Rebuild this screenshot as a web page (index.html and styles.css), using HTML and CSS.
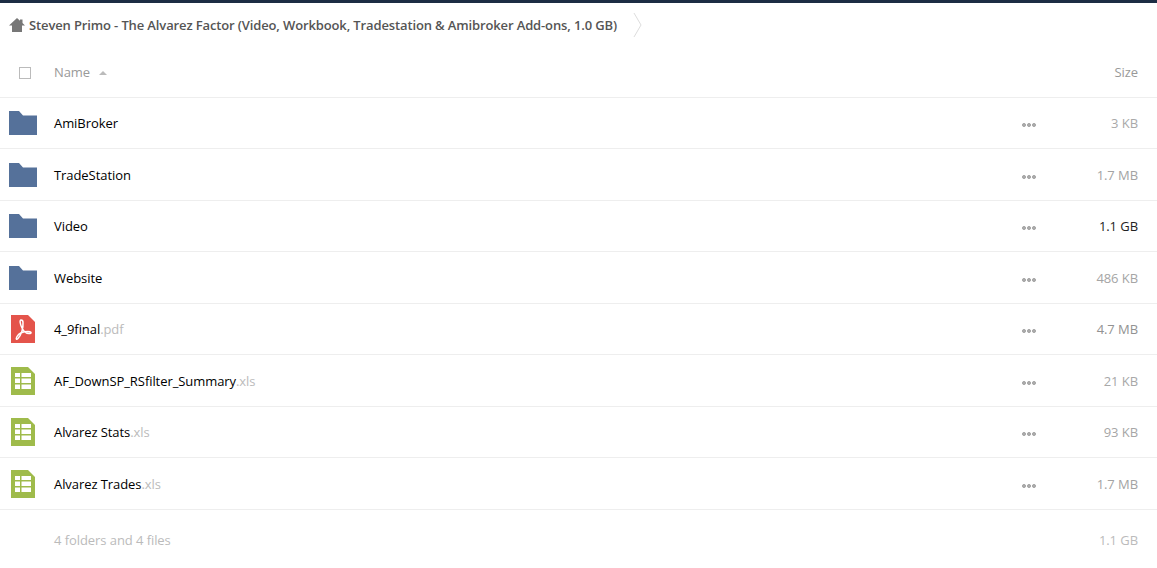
FILE: index.html
```html
<!DOCTYPE html>
<html lang="en">
<head>
  <meta charset="UTF-8" />
  <title>Files</title>
  <link rel="stylesheet" href="styles.css">
</head>
<body>
  <svg class="defs" width="0" height="0">
    <symbol id="folder" viewBox="0 0 28 24"><path d="M0 0h10l4 4.500h14V24H0z" fill="#55719a"/></symbol>
    <symbol id="sheet" viewBox="0 0 24 28">
      <path d="M0 0h17l7 7v21H0z" fill="#9fbb4b"/>
      <path d="M4 6h5v4H4zM10.500 6H20v4h-9.500zM4 11.500h5v4.500H4zM10.500 11.500H20V16h-9.500zM4 17.500h5V22H4zM10.500 17.500H20V22h-9.500z" fill="#fff"/>
    </symbol>
    <symbol id="pdf" viewBox="0 0 24 28">
      <path d="M0 0h17l7 7v21H0z" fill="#e4544b"/>
      <path d="M10 5c-1.500 0-1 4 1 8 2 4 5 6 8 5.500 2-.5 1-2-2-2-4 0-9 1.500-11 5-1.500 2.500-.5 3.500 1 2 3-3 5.500-10 5-16 0-2-1-2.500-2-2.500z" fill="none" stroke="#fff" stroke-width="1.500"/>
    </symbol>
  </svg>

  <div class="topbar"></div>

  <nav class="crumbs">
    <svg class="home" width="16" height="14" viewBox="0 0 16 14"><path d="M8 0 0 7.500h3V14h10V7.500h3L13.500 5V1.500H11v1.300z" fill="#777"/></svg>
    <span class="crumb-title">Steven Primo - The Alvarez Factor (Video, Workbook, Tradestation &amp; Amibroker Add-ons, 1.0 GB)</span>
    <svg class="crumb-arrow" width="9" height="26" viewBox="0 0 9 26"><path d="M1 1l7 12-7 12" fill="none" stroke="#ddd"/></svg>
  </nav>

  <div class="row head">
    <span class="check"></span>
    <span class="name">Name <i class="sort"></i></span>
    <span class="size">Size</span>
  </div>

  <div class="row">
    <svg class="icon folder"><use href="#folder"/></svg>
    <span class="name">AmiBroker</span>
    <span class="more"></span>
    <span class="size" style="color:#a9a9a9">3 KB</span>
  </div>
  <div class="row">
    <svg class="icon folder"><use href="#folder"/></svg>
    <span class="name">TradeStation</span>
    <span class="more"></span>
    <span class="size" style="color:#a3a3a3">1.7 MB</span>
  </div>
  <div class="row">
    <svg class="icon folder"><use href="#folder"/></svg>
    <span class="name">Video</span>
    <span class="more"></span>
    <span class="size" style="color:#222">1.1 GB</span>
  </div>
  <div class="row">
    <svg class="icon folder"><use href="#folder"/></svg>
    <span class="name">Website</span>
    <span class="more"></span>
    <span class="size" style="color:#a5a5a5">486 KB</span>
  </div>
  <div class="row">
    <svg class="icon file"><use href="#pdf"/></svg>
    <span class="name">4_9final<em>.pdf</em></span>
    <span class="more"></span>
    <span class="size" style="color:#929292">4.7 MB</span>
  </div>
  <div class="row">
    <svg class="icon file"><use href="#sheet"/></svg>
    <span class="name">AF_DownSP_RSfilter_Summary<em>.xls</em></span>
    <span class="more"></span>
    <span class="size" style="color:#a8a8a8">21 KB</span>
  </div>
  <div class="row">
    <svg class="icon file"><use href="#sheet"/></svg>
    <span class="name">Alvarez Stats<em>.xls</em></span>
    <span class="more"></span>
    <span class="size" style="color:#a6a6a6">93 KB</span>
  </div>
  <div class="row">
    <svg class="icon file"><use href="#sheet"/></svg>
    <span class="name">Alvarez Trades<em>.xls</em></span>
    <span class="more"></span>
    <span class="size" style="color:#a3a3a3">1.7 MB</span>
  </div>

  <div class="row summary">
    <span class="name">4 folders and 4 files</span>
    <span class="size">1.1 GB</span>
  </div>
</body>
</html>
```

FILE: styles.css
```css
html {
  overflow: hidden;
}
body {
  margin: 0;
  font-family: "Open Sans", sans-serif;
  font-size: 13px;
  letter-spacing: -0.07px;
  color: #000;
  background: #fff;
}
.defs {
  position: absolute;
}
.topbar {
  height: 3px;
  background: #1d2d44;
}
.crumbs {
  display: flex;
  align-items: center;
  height: 44px;
  padding-left: 9px;
  color: #555;
  font-weight: 600;
  letter-spacing: -0.13px;
}
.home {
  margin-right: 4px;
}
.crumb-arrow {
  margin-left: 16px;
}
.row {
  display: flex;
  align-items: center;
  height: 51.5px;
  box-sizing: border-box;
  border-bottom: 1px solid #eee;
  padding-top: 0.5px;
  padding-right: 19px;
}
.head {
  height: 50.5px;
  color: #999;
}
.check {
  width: 10px;
  height: 10px;
  border: 1px solid #bbb;
  margin-left: 19px;
  margin-right: 23px;
  margin-top: 2px;
}
.icon {
  flex: none;
}
.folder {
  width: 28px;
  height: 24px;
  margin-left: 9px;
  margin-right: 17px;
}
.file {
  width: 24px;
  height: 28px;
  margin-left: 11px;
  margin-right: 19px;
}
.name {
  flex: 1;
}
.name em {
  font-style: normal;
  color: #bbb;
}
.head .name {
  color: #999;
}
.sort {
  display: inline-block;
  width: 0;
  height: 0;
  margin-left: 6px;
  vertical-align: 2px;
  border: 4px solid transparent;
  border-top: 0;
  border-bottom: 4px solid #bbb;
}
/* three dots, drawn as one repeating background */
.more {
  flex: none;
  width: 15px;
  height: 4px;
  margin-top: 4px;
  margin-right: 41px;
  background: radial-gradient(circle at 2px 2px, #aaa 1.8px, transparent 2.2px) 0 0 / 5px 4px repeat-x;
}
.size {
  flex: none;
  width: 60px;
  text-align: right;
  color: #999;
}
.summary {
  border-bottom: 0;
  height: 61px;
  padding-left: 54px;
  color: #bbb;
}
.summary .size {
  color: #bbb;
}
```
